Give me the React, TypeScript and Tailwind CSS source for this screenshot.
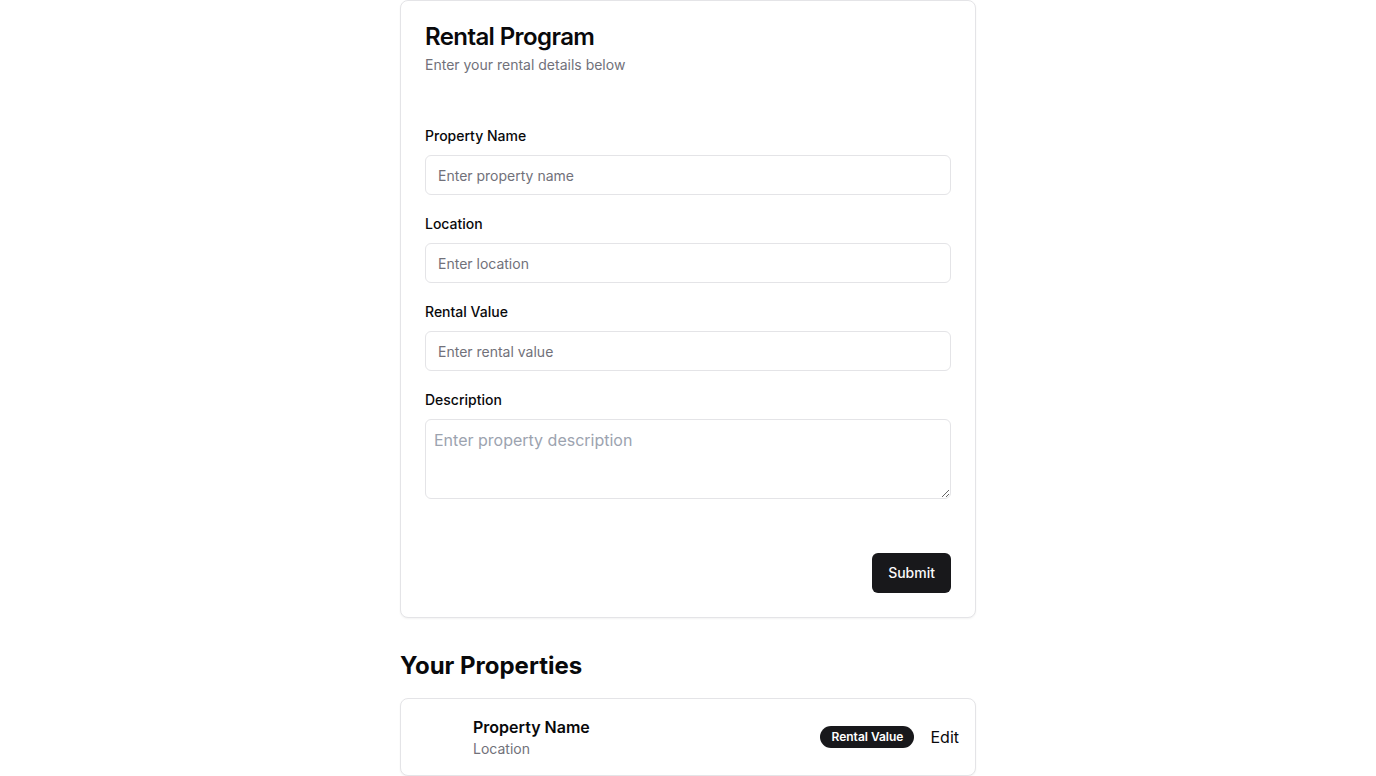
const fields = [
  { label: 'Property Name', placeholder: 'Enter property name' },
  { label: 'Location', placeholder: 'Enter location' },
  { label: 'Rental Value', placeholder: 'Enter rental value' },
];

export default function App() {
  return (
    <div
      className="min-h-screen bg-white text-[#09090b]"
      style={{ fontFamily: 'Inter, "Noto Sans", sans-serif' }}
    >
      <div className="mx-auto w-[576px]">
        <div className="rounded-lg border border-[#e4e4e7] bg-white shadow-xs">
          <div className="flex flex-col gap-1.5 p-6">
            <h1 className="text-2xl font-semibold leading-none tracking-tight">Rental Program</h1>
            <p className="text-sm leading-5 text-[#71717a]">Enter your rental details below</p>
          </div>
          <form className="px-6 pb-6 pt-[27px]" onSubmit={(e) => e.preventDefault()}>
            <div className="flex flex-col gap-[19px]">
              {fields.map((f) => (
                <div key={f.label} className="flex flex-col gap-[9px]">
                  <label className="text-sm font-medium leading-5">{f.label}</label>
                  <input
                    className="h-10 w-full rounded-md border border-[#e4e4e7] bg-white px-3 text-sm outline-none placeholder:text-[#71717a]"
                    placeholder={f.placeholder}
                  />
                </div>
              ))}
              <div className="flex flex-col gap-[9px]">
                <label className="text-sm font-medium leading-5">Description</label>
                <textarea
                  className="block h-20 w-full rounded-md border border-[#e4e4e7] bg-white px-2 py-2 text-base leading-6 outline-none placeholder:text-[#9ca3af]"
                  placeholder="Enter property description"
                />
              </div>
            </div>
            <div className="mt-[54px] flex justify-end">
              <button
                type="submit"
                className="h-10 rounded-md bg-[#18181b] px-4 text-sm font-medium text-[#fafafa]"
              >
                Submit
              </button>
            </div>
          </form>
        </div>

        <h2 className="mt-8 mb-4 text-2xl font-bold leading-8">Your Properties</h2>

        <div className="flex items-center gap-2 rounded-lg border border-[#e4e4e7] bg-white px-4 py-[14px] shadow-xs">
          <div className="h-12 w-12 shrink-0" />
          <div className="flex flex-1 flex-col">
            <span className="text-base font-semibold leading-6">Property Name</span>
            <span className="text-sm leading-5 text-[#71717a]">Location</span>
          </div>
          <div className="flex items-center gap-4">
            <span className="rounded-full bg-[#18181b] px-[11px] py-0.5 text-xs font-semibold leading-[18px] text-white">
              Rental Value
            </span>
            <button className="text-base leading-6">Edit</button>
          </div>
        </div>
      </div>
    </div>
  );
}
